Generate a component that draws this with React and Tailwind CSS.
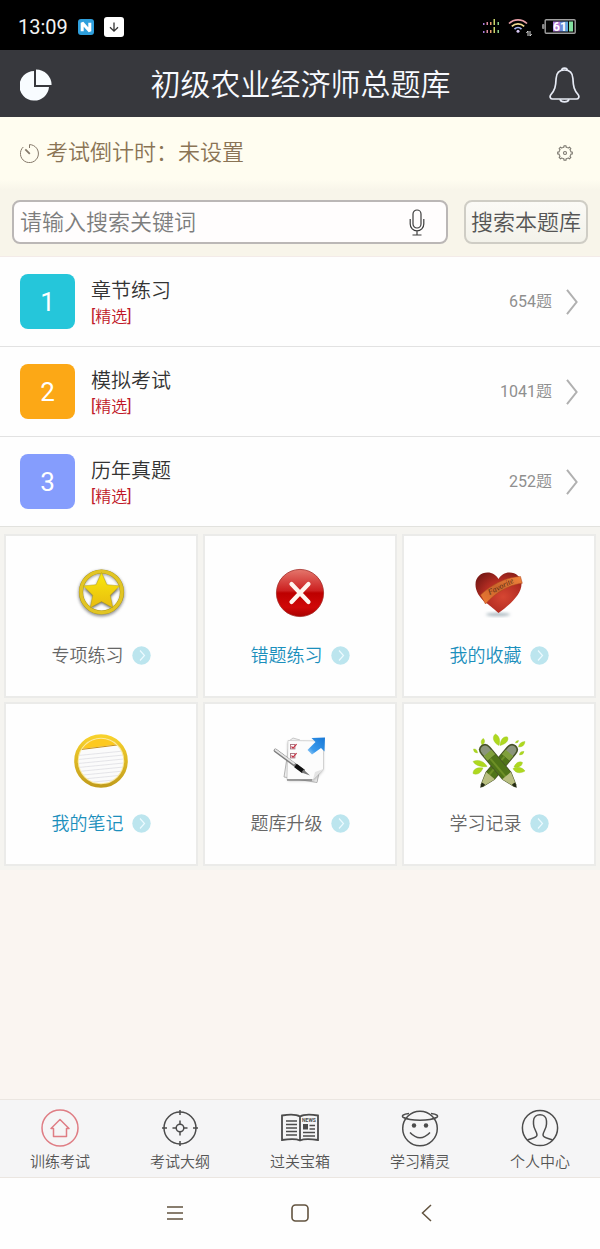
import React from "react";

function StatusBar() {
  return (
    <div className="flex h-[50px] items-center bg-black pl-[18px] pr-6 pt-[3px] text-white">
      <span className="text-[20px] font-normal leading-6 text-[#f2f2f2]">13:09</span>
      <svg className="ml-[10px] h-4 w-4" viewBox="0 0 16 16" aria-hidden="true">
        <rect width="16" height="16" rx="3" fill="#2f9fdc" />
        <path d="M4.2 12.2V3.8L11.8 12.2V3.8" fill="none" stroke="#fff" strokeWidth="3" strokeLinejoin="bevel" />
      </svg>
      <svg className="ml-[10px] h-5 w-5" viewBox="0 0 20 20" aria-hidden="true">
        <rect width="20" height="20" rx="3" fill="#fff" />
        <path d="M10 5.500v8.500M6 10.200l4 4 4-4" fill="none" stroke="#333" strokeWidth="1.300" />
      </svg>
      <div className="ml-auto flex items-center">
        <svg className="h-[15px] w-[17px]" viewBox="0 0 17 15" aria-hidden="true">
          {[0, 8].map((y) => (
            <g key={y}>
              <rect x="0" y={y + 4} width="1.5" height="2" fill="#a87bd8" />
              <rect x="3.5" y={y + 3} width="1.5" height="3" fill="#e08aa0" />
              <rect x="7" y={y + 3} width="1.5" height="3" fill="#e8a070" />
              <rect x="10.5" y={y} width="1.5" height="6" fill="#c9d66a" />
              <rect x="14.5" y={y + 3} width="1.5" height="3" fill="#8fd08a" />
            </g>
          ))}
        </svg>
        <svg className="ml-2 h-[18px] w-6" viewBox="0 0 24 18" fill="none" aria-hidden="true">
          <path d="M1 5.5a13 13 0 0 1 18 0" stroke="#e8a0a8" strokeWidth="1.7" />
          <path d="M3.8 8.4a9 9 0 0 1 12.4 0" stroke="#f2dc90" strokeWidth="1.7" />
          <path d="M6.5 11.1a5 5 0 0 1 7 0" stroke="#a9b8f0" strokeWidth="1.7" />
          <circle cx="10" cy="13.3" r="1.5" fill="#d8c8f4" />
          <path d="M20 18v-5l-1.6 2M22 13v5l1.6-2" stroke="#ddd" strokeWidth="1" />
        </svg>
        <svg className="ml-[10px] h-[15px] w-[34px]" viewBox="0 0 34 15" aria-hidden="true">
          <rect x="0" y="5" width="2.5" height="5" rx="1" fill="#888" />
          <rect x="3.2" y=".8" width="30" height="13.4" rx="1" fill="#050505" stroke="#a0a0a0" strokeWidth="1.4" />
          <rect x="11" y="2.5" width="7" height="10" fill="#b07bd6" />
          <rect x="18" y="2.5" width="4" height="10" fill="#6c8ad8" />
          <rect x="22" y="2.5" width="4" height="10" fill="#5fa8e0" />
          <rect x="27" y="2.5" width="4" height="10" fill="#84e0a0" />
          <text x="18" y="12" textAnchor="middle" fontSize="12" fontWeight="700" fill="#fff">61</text>
        </svg>
      </div>
    </div>
  );
}

function Header() {
  return (
    <header className="flex h-[67px] items-center justify-between bg-[#37383d] px-5 pt-[2px]">
      <button type="button" aria-label="统计">
        <svg className="h-8 w-8" viewBox="0 0 32 32" fill="#f8fcff" aria-hidden="true">
          <path d="M14 2A14.800 14.800 0 1 0 29 18H14Z" />
          <path d="M16 .4A15.600 15.600 0 0 1 31.600 16H16Z" />
        </svg>
      </button>
      <h1 className="text-[30px] leading-10 text-[#f8faff]">初级农业经济师总题库</h1>
      <button type="button" aria-label="通知">
        <svg className="h-[36px] w-[31px]" viewBox="0 0 31 36" fill="none" stroke="#e6eaf4" strokeWidth="1.7" strokeLinejoin="round" aria-hidden="true">
          <path d="M12.8 3.2C12.8 .4 18.2 .4 18.2 3.2" />
          <path d="M15.5 3C10 3 7.3 6.6 7.1 11.5 6.8 19.6 5.8 23 1.8 27.8.4 29.6 1.3 32 3.6 32H27.4C29.7 32 30.6 29.6 29.2 27.8 25.2 23 24.2 19.6 23.9 11.5 23.7 6.6 21 3 15.5 3Z" />
          <path d="M11 32.3C12 35.8 19 35.8 20 32.3" />
        </svg>
      </button>
    </header>
  );
}

function Countdown() {
  return (
    <section className="flex h-[73px] items-center bg-linear-to-b from-[#fffdf0] from-85% to-[#f8f5ea] pb-px pl-5 pr-[27px] text-[#8a7455]">
      <svg className="h-[19px] w-[19px]" viewBox="0 0 19 19" fill="none" stroke="#85796a" strokeWidth="1" aria-hidden="true">
        <path d="M3.3 3A9 9 0 1 0 9.5.6V4" />
        <path d="M5.3 5.3l4.5 4.5" strokeWidth="1.8" />
      </svg>
      <p className="ml-[7px] text-[22px] leading-8">考试倒计时：未设置</p>
      <button type="button" aria-label="设置" className="ml-auto">
        <svg className="h-4 w-4" viewBox="0 0 16 16" fill="none" stroke="#7b776e" strokeWidth="1.1" strokeLinejoin="round" aria-hidden="true">
          {[0, 45, 90, 135, 180, 225, 270, 315].map((a) => (
            <path key={a} transform={`rotate(${a} 8 8)`} d="M5.700 2.450L6.900 2.100 7 .7H9L9.100 2.100 10.300 2.450" />
          ))}
          <circle cx="8" cy="8" r="1.500" />
        </svg>
      </button>
    </section>
  );
}

function SearchBar() {
  return (
    <form className="flex items-start gap-4 border-b border-[#f3ebe8] bg-[#f8f5ea] px-3 pb-3 pt-[10px]" onSubmit={(e) => e.preventDefault()}>
      <div className="flex h-[44px] min-w-0 flex-1 items-center rounded-lg border-2 border-[#bbb7b6] bg-[#fffdfd] pl-[6px] pr-[21px]">
        <input
          type="text"
          aria-label="搜索关键词"
          placeholder="请输入搜索关键词"
          className="min-w-0 flex-1 bg-transparent pt-[2px] text-[22px] leading-8 text-[#444] outline-none placeholder:text-[#7d7d7d]"
        />
        <button type="button" aria-label="语音输入">
          <svg className="h-[27px] w-4" viewBox="0 0 16 27" fill="none" stroke="#3c3c3c" strokeWidth="1.200" aria-hidden="true">
            <rect x="4" y="1" width="8" height="18" rx="4" />
            <path d="M1.2 10v5a6.8 6.8 0 0 0 13.6 0v-5M8 22v4M3.5 26h9" />
          </svg>
        </button>
      </div>
      <button type="submit" className="h-[44px] rounded-lg border-2 border-[#cfcdc5] bg-linear-to-b from-[#fbfaf6] to-[#f3f2ea] px-[5px] pt-[2px] text-[22px] leading-8 text-[#555]">
        搜索本题库
      </button>
    </form>
  );
}

const sections = [
  { n: 1, title: "章节练习", count: 654, color: "bg-[#25c6da]" },
  { n: 2, title: "模拟考试", count: 1041, color: "bg-[#fca816]" },
  { n: 3, title: "历年真题", count: 252, color: "bg-[#859dfd]" },
];

function SectionList() {
  return (
    <ul className="divide-y divide-[#e2e2e2] bg-[#fefefe]">
      {sections.map((s) => (
        <li key={s.n}>
          <a href="#" className="flex items-center px-5 py-[17px]">
            <span className={`flex h-[55px] w-[55px] items-center justify-center rounded-lg pt-[2px] text-[26px] font-normal text-white ${s.color}`}>{s.n}</span>
            <span className="ml-4 flex flex-col pt-[2px]">
              <span className="text-[20px] leading-7 text-[#333]">{s.title}</span>
              <span className="text-[16px] font-normal leading-6 text-[#c01828]">
                [<span className="font-[350]">精选</span>]
              </span>
            </span>
            <span className="ml-auto text-[16px] leading-6 text-[#8f8f8f]">
              <span className="font-normal">{s.count}</span>题
            </span>
            <svg className="ml-[14px] mr-[2px] h-[26px] w-3" viewBox="0 0 12 26" fill="none" stroke="#b0b0b0" strokeWidth="2" aria-hidden="true">
              <path d="M1 .8L10.6 13 1 25.2" />
            </svg>
          </a>
        </li>
      ))}
    </ul>
  );
}

function StarIcon() {
  return (
    <svg className="h-14 w-14 overflow-visible" viewBox="0 0 56 56" aria-hidden="true">
      <defs>
        <linearGradient id="starFill" x1="0" y1="0" x2="0" y2="1">
          <stop offset="0" stopColor="#fae90b" />
          <stop offset="1" stopColor="#e8bb10" />
        </linearGradient>
        <filter id="soft" x="-30%" y="-30%" width="160%" height="160%">
          <feGaussianBlur stdDeviation="1.4" />
        </filter>
      </defs>
      <circle cx="28.500" cy="28.500" r="21" fill="none" stroke="#777" strokeWidth="4" filter="url(#soft)" opacity=".8" />
      <path d="M28.500 9l5.400 12.700 13 1.400-9.700 9.200 2.800 12.200-11.500-6.600L17 44.500l2.800-12.200-9.700-9.200 13-1.400Z" fill="#555" filter="url(#soft)" opacity=".9" />
      <circle cx="28.500" cy="27" r="20.500" fill="none" stroke="#a8941a" strokeWidth="4.200" />
      <circle cx="28.500" cy="27" r="20.500" fill="none" stroke="#e2c524" strokeWidth="3.400" />
      <path d="M28.500 7.500l5.400 12.200 12.800 1.200-9.500 9.400 2.600 12.500-11.300-6.200-11.300 6.200 2.600-12.500-9.500-9.400 12.800-1.200Z" fill="url(#starFill)" stroke="#b5a10f" strokeWidth=".5" />
    </svg>
  );
}

function WrongIcon() {
  return (
    <svg className="h-14 w-14" viewBox="0 0 56 56" aria-hidden="true">
      <defs>
        <linearGradient id="redBall" x1="0" y1="0" x2="0" y2="1">
          <stop offset="0" stopColor="#e4766c" />
          <stop offset=".45" stopColor="#cc2020" />
          <stop offset=".5" stopColor="#bd0000" />
          <stop offset=".8" stopColor="#d00808" />
          <stop offset="1" stopColor="#a80000" />
        </linearGradient>
      </defs>
      <circle cx="28" cy="28" r="23.600" fill="url(#redBall)" stroke="#a32a25" strokeWidth=".8" />
      <path d="M19.500 19l17 18M36.500 19l-17 18" stroke="#fff5ef" strokeWidth="4.200" strokeLinecap="round" />
    </svg>
  );
}

function HeartIcon() {
  return (
    <svg className="h-14 w-14" viewBox="0 0 56 56" aria-hidden="true">
      <defs>
        <radialGradient id="heart" cx=".6" cy=".6" r=".7">
          <stop offset="0" stopColor="#d64632" />
          <stop offset=".6" stopColor="#b22c22" />
          <stop offset="1" stopColor="#7c1a16" />
        </radialGradient>
        <linearGradient id="ribbon" x1="0" y1="1" x2="1" y2="0">
          <stop offset="0" stopColor="#f07a34" />
          <stop offset=".5" stopColor="#c9662c" />
          <stop offset="1" stopColor="#f4853c" />
        </linearGradient>
      </defs>
      <ellipse cx="27" cy="49.500" rx="12" ry="1.800" fill="#aebbc2" filter="url(#soft)" />
      <path d="M27.500 48C22 43 17 39 14.500 37.500 8 32 4.500 26 4.500 19.500 4.500 12 10 7.500 16.500 7.500c5 0 8.500 2.500 11 6.500 2.500-4 6-6.500 11-6.500C45 7.500 50.500 12 50.500 19 50.500 29 40 39 27.500 48Z" fill="url(#heart)" />
      <path d="M9.500 30C19 21 34 12 49.500 11.500l1.800 6.800C37 20 24 28 14.500 39Z" fill="url(#ribbon)" stroke="#a8431b" strokeWidth=".5" />
      <text transform="translate(18.500 30) rotate(-27)" fontFamily="Liberation Serif, serif" fontStyle="italic" fontSize="8" fill="#572c16">Favorite</text>
    </svg>
  );
}

function NoteIcon() {
  return (
    <svg className="h-14 w-14" viewBox="0 0 56 56" aria-hidden="true">
      <defs>
        <linearGradient id="gold" x1="0" y1="0" x2="0" y2="1">
          <stop offset="0" stopColor="#f8d22c" />
          <stop offset="1" stopColor="#c29d1c" />
        </linearGradient>
        <clipPath id="noteClip">
          <circle cx="28" cy="28" r="23.500" />
        </clipPath>
      </defs>
      <circle cx="28" cy="28" r="23.500" fill="#fbfbfb" />
      <g clipPath="url(#noteClip)">
        <path d="M0 0H56V10L0 17Z" fill="#fdc91f" />
        <path d="M0 17.500L56 10.500" stroke="#c58e16" strokeWidth="1" />
        {[0, 1, 2, 3, 4, 5, 6, 7].map((i) => (
          <path key={i} d={`M0 ${23 + i * 4}L56 ${17.5 + i * 4}`} stroke="#dedee3" strokeWidth=".8" />
        ))}
      </g>
      <circle cx="28" cy="28" r="22.800" fill="none" stroke="#fbeaa0" strokeWidth="1.200" />
      <circle cx="28" cy="28" r="25" fill="none" stroke="url(#gold)" strokeWidth="3.600" />
    </svg>
  );
}

function UpgradeIcon() {
  return (
    <svg className="h-14 w-14" viewBox="0 0 56 56" aria-hidden="true">
      <defs>
        <linearGradient id="blueArrow" x1="1" y1="0" x2="0" y2="1">
          <stop offset="0" stopColor="#1878d6" />
          <stop offset=".7" stopColor="#3a9aec" />
          <stop offset="1" stopColor="#a8d4f8" />
        </linearGradient>
      </defs>
      <path d="M17 12L12 44 45 49.500 51 20Z" fill="#f1f1f1" stroke="#aaa" strokeWidth=".9" />
      <path d="M16 9H51V37L42 47.500H16Z" fill="#8f8f8f" filter="url(#soft)" opacity=".7" />
      <path d="M17 8L21 5 28 7" fill="#eee" stroke="#bbb" strokeWidth=".8" />
      <path d="M16 7.500L51.500 8V36L41 46.500H15Z" fill="#fcfcfc" stroke="#c5c5c5" strokeWidth=".7" />
      <path d="M41 46.500L43 39 51.500 36Z" fill="#e4e4e4" />
      <path d="M15 47H40" stroke="#757575" strokeWidth="1.200" />
      {[11.5, 20.5].map((y) => (
        <g key={y} fill="none">
          <rect x="18.500" y={y} width="4.400" height="4.400" stroke="#a5707c" strokeWidth=".9" />
          <path d={`M19.500 ${y + 2}l1.500 1.600 3.600-4`} stroke="#c73042" strokeWidth="1.100" />
        </g>
      ))}
      <path d="M39.500 5L53 4.500 52.500 18.500 49 15 40 21.500 35.500 17 43.500 9Z" fill="url(#blueArrow)" />
      <path d="M3.500 17.500L31 38" stroke="#7d7d7d" strokeWidth="3.600" strokeLinecap="round" />
      <path d="M3.500 17L22 30.500" stroke="#e5e5e5" strokeWidth="1.900" strokeLinecap="round" />
      <path d="M23.500 32.500L31.500 38.500" stroke="#111" strokeWidth="4.200" />
      <path d="M31.500 36.500L38 42.500 29.500 39.500Z" fill="#777" />
    </svg>
  );
}

function Pencil() {
  return (
    <g>
      <path d="M-6-20Q-6-27 0-27 6-27 6-20V13L1.500 26.500H-1.500L-6 13Z" fill="#465228" />
      <path d="M-4.500-20Q-4.500-25.300 0-25.300 4.500-25.300 4.500-20V-16H-4.500Z" fill="#8b957c" />
      <rect x="-5" y="-17" width="10" height="6" fill="#80a03c" />
      <path d="M-5.300-11H5.300V13H-5.300Z" fill="#507518" />
      <path d="M-1.500-11V13" stroke="#6d8f26" strokeWidth="2" />
      <path d="M-5.700 12.500H5.700L1.900 24H-1.900Z" fill="#b8be80" />
      <path d="M-1.900 23H1.900L.5 28H-.5Z" fill="#252a15" />
    </g>
  );
}

function PencilsIcon() {
  return (
    <svg className="h-14 w-14" viewBox="0 0 56 56" aria-hidden="true">
      <g fill="#aed81f" stroke="#97c41c" strokeWidth=".4">
        <path d="M28 12.500C21.500 9.500 21 3 24.500 1 28.500 3 29.500 8 28 12.500Z" />
        <path d="M29 12.500C29.500 7 32 3 36.500 4 38.500 8 33.500 11.500 29 12.500Z" />
        <path d="M11 12C9.500 9 10 6.500 12.500 5.500 14.500 8 13.500 10.500 11 12Z" />
        <path d="M2.500 16Q6 15.500 6.500 20 2.500 20 2.500 16Z" />
        <path d="M16 33.500C10 34.500 4 32 2 28.500 7 26 13 28 16 33.500Z" />
        <path d="M12 35C10 40 6 42.500 2 40.500 2 36 6.500 34 12 35Z" />
        <path d="M43 34C45 29 49 28 51.500 29.500 51 33.500 47 35 43 34Z" />
        <path d="M42 35.500C47 33 52 35 54 38 49 41 44 40 42 35.500Z" />
        <path d="M47.500 14Q48 9 54 8.500 53.500 14 47.500 14Z" />
        <path d="M44.500 10Q44.500 7.500 47.500 7.500 47.500 10 44.500 10Z" />
        <path d="M48.500 22Q48.500 18 53 18.500 52.500 22 48.500 22Z" />
      </g>
      <g transform="translate(27.500 33) rotate(40)">
        <Pencil />
      </g>
      <g transform="translate(27.500 33) rotate(-40)">
        <Pencil />
      </g>
    </svg>
  );
}

const tools = [
  { label: "专项练习", Icon: StarIcon, color: "text-[#666]" },
  { label: "错题练习", Icon: WrongIcon, color: "text-[#1b8fbc]" },
  { label: "我的收藏", Icon: HeartIcon, color: "text-[#1b8fbc]" },
  { label: "我的笔记", Icon: NoteIcon, color: "text-[#1b8fbc]" },
  { label: "题库升级", Icon: UpgradeIcon, color: "text-[#666]" },
  { label: "学习记录", Icon: PencilsIcon, color: "text-[#666]" },
];

function ToolGrid() {
  return (
    <section className="grid grid-cols-3 gap-x-[5px] gap-y-1 border-t border-[#e2e2de] bg-[#f5f4f0] px-1 pb-1 pt-[7px]">
      {tools.map(({ label, Icon, color }) => (
        <a key={label} href="#" className="flex flex-col items-center border-2 border-[#ebebe9] bg-[#fefefe] pb-[26px] pt-[29px]">
          <Icon />
          <span className={`mt-5 flex items-center gap-2 text-[18px] leading-7 ${color}`}>
            <span className="pt-px">{label}</span>
            <svg className="h-[19px] w-[19px]" viewBox="0 0 19 19" aria-hidden="true">
              <circle cx="9.500" cy="9.500" r="9.200" fill="#bce5ee" />
              <path d="M8 4.500l4.500 5L8 14.500" fill="none" stroke="#ecfaff" strokeWidth="1.200" />
            </svg>
          </span>
        </a>
      ))}
    </section>
  );
}

function TabIcon({ children, className = "" }) {
  return (
    <svg className={`h-[38px] w-[38px] ${className}`} viewBox="0 0 38 38" fill="none" stroke="currentColor" strokeWidth="1.500" aria-hidden="true">
      {children}
    </svg>
  );
}

const tabs = [
  {
    label: "训练考试",
    icon: (
      <TabIcon className="text-[#df7d84]">
        <circle cx="19" cy="19" r="18" />
        <path d="M10 19.500L19 10.500 28 19.500H25.500V27.500H12.500V19.500Z" strokeLinejoin="round" />
      </TabIcon>
    ),
  },
  {
    label: "考试大纲",
    icon: (
      <TabIcon>
        <circle cx="19" cy="19" r="16" />
        <circle cx="19" cy="19" r="3.800" />
        <path d="M19 1v5M19 32v5M1 19h5M32 19h5M19 11.500v3.700M19 22.800v3.700M11.500 19h3.700M22.800 19h3.700" />
      </TabIcon>
    ),
  },
  {
    label: "过关宝箱",
    icon: (
      <TabIcon>
        <path d="M19 7.500Q14 4.500 1 6.500V31Q14 29 19 31.500 24 29 37 31V6.500Q24 4.500 19 7.500V31.500" strokeWidth="1.800" />
        <path d="M5 12h11M5 15.500h11M5 19h11M5 22.500h11M5 26h11M28.500 16.500H34M28.500 20H34M22 23.500h12M22 27h12" strokeWidth="1.700" />
        <rect x="22" y="15" width="5" height="5.500" fill="currentColor" stroke="none" />
        <text x="28" y="13" textAnchor="middle" fontSize="5" fontWeight="700" fill="currentColor" stroke="none">NEWS</text>
      </TabIcon>
    ),
  },
  {
    label: "学习精灵",
    icon: (
      <TabIcon>
        <circle cx="19" cy="19.500" r="17.300" />
        <path d="M8 4.500C2 5 0 7 2.500 8.500 9 12 29 12 35.500 8.500 38 7 36 5 30 4.500" />
        <circle cx="13" cy="16.500" r="2.200" fill="currentColor" stroke="none" />
        <circle cx="25" cy="16.500" r="2.200" fill="currentColor" stroke="none" />
        <path d="M9 23.500Q19 34 29 23.500" />
      </TabIcon>
    ),
  },
  {
    label: "个人中心",
    icon: (
      <TabIcon>
        <circle cx="19" cy="19" r="17.600" />
        <path d="M6.500 31C9 29.500 16 29 16 26 16 22.500 12.500 20 12.500 15V12C12.500 3.500 25.500 3.500 25.500 12v3C25.500 20 22 22.500 22 26 22 29 29 29.500 31.500 31" />
      </TabIcon>
    ),
  },
];

function TabBar() {
  return (
    <nav className="grid grid-cols-5 border-y border-[#ebe6e1] bg-[#f5f5f6]">
      {tabs.map((t) => (
        <a key={t.label} href="#" className="flex flex-col items-center gap-1 pb-[3px] pt-[9px] text-[#4c4c4c]">
          {t.icon}
          <span className="text-[15px] leading-[23px] text-[#555]">{t.label}</span>
        </a>
      ))}
    </nav>
  );
}

function SystemNav() {
  return (
    <div className="flex h-[71px] items-center justify-center gap-[107px] bg-[#fefefe] pb-[2px] text-[#62533f]">
      <button type="button" aria-label="最近任务">
        <svg className="h-[18px] w-[18px]" viewBox="0 0 18 18" stroke="currentColor" strokeWidth="1.500" aria-hidden="true">
          <path d="M1 3h16M1 9h16M1 15h16" />
        </svg>
      </button>
      <button type="button" aria-label="主屏幕">
        <svg className="h-[18px] w-[18px]" viewBox="0 0 18 18" fill="none" stroke="currentColor" strokeWidth="1.600" aria-hidden="true">
          <rect x="1" y="1" width="16" height="16" rx="3.500" />
        </svg>
      </button>
      <button type="button" aria-label="返回">
        <svg className="h-[18px] w-[18px]" viewBox="0 0 18 18" fill="none" stroke="currentColor" strokeWidth="1.500" aria-hidden="true">
          <path d="M15 1L6.500 9l8.500 8" />
        </svg>
      </button>
    </div>
  );
}

export default function App() {
  return (
    <div className="flex min-h-screen flex-col bg-[#faf5f1] font-[350] [font-family:Roboto,'Noto_Sans_CJK_SC',sans-serif]">
      <StatusBar />
      <Header />
      <main className="flex-1">
        <Countdown />
        <SearchBar />
        <SectionList />
        <ToolGrid />
      </main>
      <TabBar />
      <SystemNav />
    </div>
  );
}
